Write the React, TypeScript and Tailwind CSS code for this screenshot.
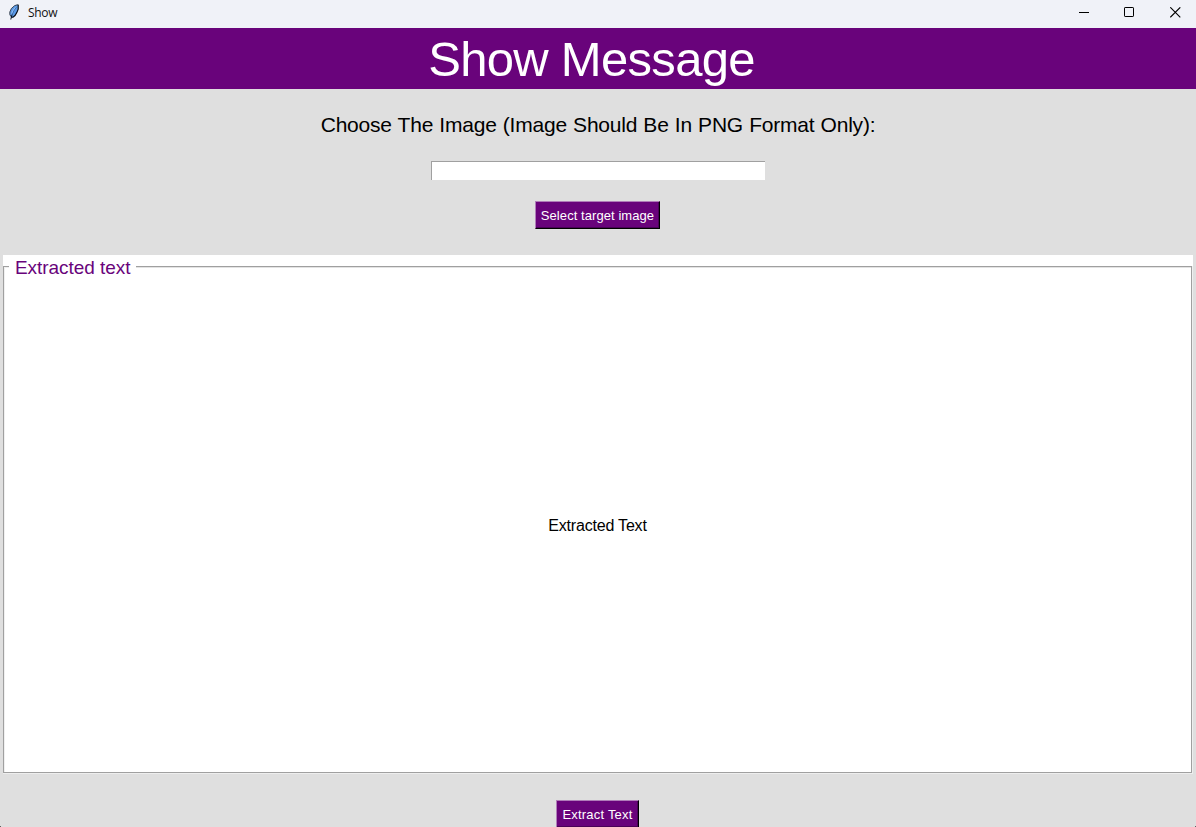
import type { ReactNode } from 'react';

function Feather() {
  return (
    <svg className="block h-4 w-[10px]" viewBox="0 0 10 16" fill="none">
      <path d="M8.5 .7 9.3 1v4L8 8.5l-2 3-2 1.8H2L.8 11V8l1.5-3.5L5.5 1.5Z" fill="#5b9be8" />
      <path d="M8.5.7 5.6 1.7 2.4 4.5.8 8v2.5l1.1 2" stroke="#333a44" strokeWidth="0.9" />
      <path d="M8.6.7 9.2 1.3v3.8L7.8 8.6 6 11.5l-2 1.7H2.2" stroke="#090d14" strokeWidth="1.2" />
      <path d="M3.2 10.5 2.6 12 1.8 15.5" stroke="#0a1422" strokeWidth="1" />
      <path d="M7.4 3 5 6.5 3.2 10.5" stroke="#28508a" strokeWidth="0.6" />
      <path d="M6.5 3.2 4 6.5 2.6 9.5" stroke="#b9d8fa" strokeWidth="0.6" />
    </svg>
  );
}

function TitleBar() {
  return (
    <header className="flex h-7 shrink-0 items-start bg-[#f0f2f8] pl-[9px]">
      <div className="pt-1"><Feather /></div>
      <span className="ml-[9px] mt-[5px] font-['Open_Sans',sans-serif] text-[12px] leading-4 tracking-[-0.3px] text-[#111]">Show</span>
      <div className="ml-auto flex h-[25px] items-center">
        <button aria-label="Minimize" className="flex h-full w-[46px] items-center justify-center">
          <svg className="h-[11px] w-[11px]" viewBox="0 0 11 11"><path d="M0 5.5h10" stroke="#000" /></svg>
        </button>
        <button aria-label="Maximize" className="flex h-full w-[45px] items-center justify-center">
          <svg className="h-[11px] w-[11px]" viewBox="0 0 11 11" fill="none"><rect x=".5" y=".5" width="9" height="9" rx=".6" stroke="#000" /></svg>
        </button>
        <button aria-label="Close" className="flex h-full w-[44px] items-center justify-center pl-[3px]">
          <svg className="h-[11px] w-[11px]" viewBox="0 0 11 11"><path d="m.3.3 10 10m0-10-10 10" stroke="#000" strokeWidth="1.1" /></svg>
        </button>
      </div>
    </header>
  );
}

function RaisedButton({ className, children }: { className: string; children: ReactNode }) {
  return (
    <button
      className={`flex h-7 shrink-0 items-center justify-center whitespace-nowrap border border-b-black border-l-[#b07db9] border-r-black border-t-[#b07db9] bg-[#69037b] pt-0.5 text-[13px] leading-4 text-white shadow-[inset_-1px_-1px_0_#4a0257] ${className}`}
    >
      {children}
    </button>
  );
}

export default function App() {
  return (
    <div className="relative flex h-[827px] w-[1196px] flex-col overflow-hidden bg-[#dfdfdf] font-['Liberation_Sans',Arial,sans-serif] text-black">
      <TitleBar />
      <h1 className="h-[61px] shrink-0 bg-[#69037b] pr-[13px] pt-px text-center text-[49px] leading-[60px] tracking-[-0.7px] text-white">Show Message</h1>
      <main className="flex min-h-0 flex-1 flex-col items-center">
        <label htmlFor="image-path" className="mt-6 h-6 whitespace-nowrap text-[21px] leading-6 tracking-[-0.22px] [word-spacing:0.6px]">
          Choose The Image (Image Should Be In PNG Format Only):
        </label>
        <input id="image-path" className="mt-6 h-[19px] w-[334px] shrink-0 border-l border-t border-[#a0a0a0] bg-white outline-none" />
        <RaisedButton className="mr-px mt-[21px] w-[125px] tracking-[0.07px]">Select target image</RaisedButton>
        <section className="mt-[26px] flex h-[519px] w-[1190px] shrink-0 flex-col bg-white">
          <div className="flex h-6 shrink-0">
            <span className="mt-[11px] h-[13px] w-[6px] border-l border-t border-[#a0a0a0] shadow-[inset_1px_1px_0_#f0f0f0]" />
            <h2 className="w-[127px] whitespace-nowrap pl-[6px] pt-px text-[19px] leading-6 text-[#69037b] tracking-[-0.05px]">Extracted text</h2>
            <span className="mt-[11px] h-[13px] flex-1 border-r border-t border-[#a0a0a0] shadow-[inset_0_1px_0_#e3e3e3]" />
            <span className="mt-[11px] h-[13px] w-px bg-[#f0f0f0]" />
          </div>
          <div className="flex flex-1 border-b border-r border-[#eeeeee]">
            <p className="flex flex-1 items-center justify-center border-x border-b border-[#a0a0a0] text-[16px] leading-5 tracking-[-0.2px] shadow-[inset_1px_0_0_#f0f0f0]">Extracted Text</p>
          </div>
        </section>
        <RaisedButton className="mr-px mt-[26px] w-[83px] tracking-[0.2px]">Extract Text</RaisedButton>
      </main>
      <span className="absolute bottom-0 left-0 h-px w-px bg-[#606060]" />
      <span className="absolute bottom-0 right-0 h-px w-px bg-[#606060]" />
    </div>
  );
}
